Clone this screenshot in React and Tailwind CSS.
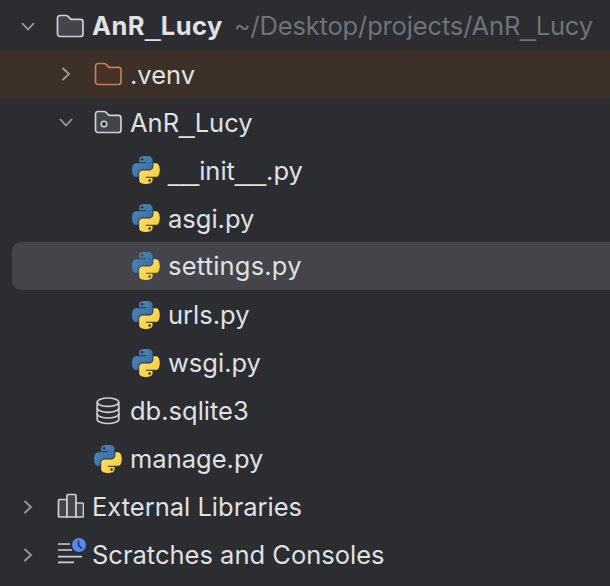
import React from "react";

const Chevron = ({ open }) => (
  <svg width="16" height="16" viewBox="0 0 16 16" fill="none" stroke="#9a9ca3" strokeWidth="1.8">
    {open ? <path d="M2 5l6 6.5L14 5" /> : <path d="M4.500 2l6.500 6-6.500 6" />}
  </svg>
);

const FOLDER = "M1.500 6a2.500 2.500 0 0 1 2.500-2.500h6.200c.7 0 1.300.3 1.800.8l3 3h9.500a2.500 2.500 0 0 1 2.500 2.500v12.200a2.500 2.500 0 0 1-2.500 2.500H4a2.500 2.500 0 0 1-2.500-2.500z";

const Folder = ({ stroke = "#ced0d6", fill = "#43454a", dot }) => (
  <svg width="28" height="28" viewBox="0 0 28 28" fill="none">
    <path d={FOLDER} fill={fill} stroke={stroke} strokeWidth="1.7" />
    {dot && <circle cx="10" cy="16" r="2.800" fill="#2b2d30" stroke={stroke} strokeWidth="1.600" />}
  </svg>
);

const Python = () => (
  <svg width="28" height="28" viewBox="0 0 112 112">
    <defs>
      <linearGradient id="pyb" x1="0" y1="0" x2="1" y2="1">
        <stop offset="0" stopColor="#4f8cc4" />
        <stop offset="1" stopColor="#376797" />
      </linearGradient>
      <linearGradient id="pyy" x1="0" y1="0" x2="1" y2="1">
        <stop offset="0" stopColor="#fde565" />
        <stop offset="1" stopColor="#f5c93c" />
      </linearGradient>
    </defs>
    <path fill="url(#pyb)" d="M54.9 0C50.3 0 46 .4 42.1 1.100 30.800 3.100 28.700 7.300 28.700 15v10.200h26.800v3.400H18.600C10.800 28.700 4 33.300 1.900 42.200c-2.500 10.200-2.600 16.600 0 27.300 1.900 7.900 6.500 13.600 14.200 13.600h9.200V70.800c0-8.800 7.700-16.700 16.800-16.700h26.800c7.500 0 13.400-6.100 13.400-13.600V15C82.300 7.700 76.200 2.300 68.900 1.100 64.300.3 59.500 0 54.900 0zM40.400 8.200c2.800 0 5 2.300 5 5.100s-2.300 5.100-5 5.100-5-2.300-5-5.100 2.300-5.100 5-5.100z" />
    <path fill="url(#pyy)" d="M85.600 28.700v11.900c0 9.200-7.800 17-16.700 17H42.100c-7.300 0-13.400 6.300-13.400 13.600v25.500c0 7.300 6.300 11.500 13.400 13.600 8.500 2.500 16.600 2.900 26.800 0 6.800-2 13.400-5.900 13.400-13.600V86.500H55.500v-3.400h40.200c7.800 0 10.700-5.400 13.400-13.600 2.800-8.400 2.700-16.500 0-27.300-1.900-7.800-5.600-13.600-13.400-13.600zM70.600 93.300c2.800 0 5 2.300 5 5.100s-2.300 5.100-5 5.100-5-2.300-5-5.100 2.300-5.100 5-5.100z" />
  </svg>
);

const Database = () => (
  <svg width="28" height="28" viewBox="0 0 28 28" fill="none" stroke="#ced0d6" strokeWidth="1.700">
    <ellipse cx="14" cy="5.200" rx="10.800" ry="4.200" />
    <path d="M3.200 5.200v17c0 2.400 4.800 4.300 10.800 4.300s10.800-1.900 10.800-4.300v-17" />
    <path d="M3.200 11c0 2.400 4.800 4.300 10.800 4.300S24.800 13.400 24.800 11" />
    <path d="M3.200 16.700c0 2.400 4.800 4.300 10.800 4.300s10.800-1.900 10.800-4.300" />
  </svg>
);

const Libraries = () => (
  <svg width="28" height="28" viewBox="0 0 28 28" fill="none" stroke="#ced0d6" strokeWidth="1.700">
    <path d="M2.500 7.500a1 1 0 0 1 1-1h7.500V24H3.500a1 1 0 0 1-1-1z" fill="#43454a" />
    <path d="M11 2.500a1 1 0 0 1 1-1h7a1 1 0 0 1 1 1V24h-9z" fill="#43454a" />
    <path d="M20 10h6.500a1 1 0 0 1 1 1v12a1 1 0 0 1-1 1H20z" fill="#43454a" />
  </svg>
);

const Scratches = () => (
  <svg width="28" height="28" viewBox="0 0 28 28" fill="none" className="overflow-visible">
    <path d="M2 3h12M2 9h14M2 15.700h24M2 21.300h16" stroke="#ced0d6" strokeWidth="1.700" />
    <circle cx="23" cy="4" r="7" fill="#548af7" />
    <path d="M22.500 -.5v5l3.500 3" stroke="#2b2d30" strokeWidth="1.600" />
  </svg>
);

const Us = ({ children }) => (
  <span className="font-['Liberation_Sans'] text-[28px] font-normal leading-none">{children}</span>
);

const Row = ({ pl, chevron, icon, bg = "", children }) => (
  <div className={`flex h-[48.1px] items-center ${pl} ${bg}`}>
    <span className="flex w-[36px] shrink-0 items-center">
      {chevron && <Chevron open={chevron === "open"} />}
    </span>
    <span className="flex w-[28px] shrink-0 items-center">{icon}</span>
    <span className="ml-[8px] whitespace-nowrap pt-[1px]">{children}</span>
  </div>
);

export default function App() {
  return (
    <div
      className="h-[586px] w-[610px] overflow-hidden bg-[#2b2d30] pt-[2px] text-[25.5px] text-[#dfe1e5]"
      style={{ fontFamily: "Inter, sans-serif" }}
    >
      <Row pl="pl-[20px]" chevron="open" icon={<Folder />}>
        <span className="font-bold tracking-[0.4px]">AnR<Us>_</Us>Lucy</span>
        <span className="ml-[11px] tracking-[-0.15px] text-[#6f737a]">~/Desktop/projects/AnR<Us>_</Us>Lucy</span>
      </Row>
      <Row pl="pl-[58px]" chevron="closed" bg="bg-[#3d3027]" icon={<Folder stroke="#c77d55" fill="#45322b" />}>
        .venv
      </Row>
      <Row pl="pl-[58px]" chevron="open" icon={<Folder dot />}>AnR<Us>_</Us>Lucy</Row>
      <Row pl="pl-[96px]" icon={<Python />}><Us>__</Us>init<Us>__</Us>.py</Row>
      <Row pl="pl-[96px]" icon={<Python />}>asgi.py</Row>
      <Row pl="pl-[96px]" icon={<Python />} bg="ml-[12px] -mt-[0.6px] mb-[0.6px] !pl-[84px] rounded-l-[9px] bg-[#43454a]">
        <span className="tracking-[0.2px]">settings.py</span>
      </Row>
      <Row pl="pl-[96px]" icon={<Python />}>urls.py</Row>
      <Row pl="pl-[96px]" icon={<Python />}>wsgi.py</Row>
      <Row pl="pl-[58px]" icon={<Database />}>db.sqlite3</Row>
      <Row pl="pl-[58px]" icon={<Python />}>manage.py</Row>
      <Row pl="pl-[20px]" chevron="closed" icon={<Libraries />}>External Libraries</Row>
      <Row pl="pl-[20px]" chevron="closed" icon={<Scratches />}>Scratches and Consoles</Row>
    </div>
  );
}
